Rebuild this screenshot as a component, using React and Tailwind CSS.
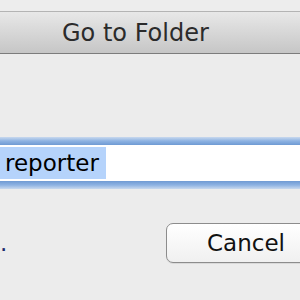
export default function App() {
  return (
    <div
      className="w-[300px] h-[300px] overflow-hidden bg-[#ececec] flex flex-col"
      style={{ fontFamily: '"DejaVu Sans", "Liberation Sans", sans-serif' }}
    >
      <div className="h-[12px] shrink-0 border-b border-[#b4b4b4] bg-[#ededed]" />
      <div className="h-[42px] shrink-0 flex items-center pl-[62px] bg-gradient-to-b from-[#e8e8e8] to-[#c6c6c6] border-b border-[#7c7c7c]">
        <span className="text-[24px] leading-none text-[#2b2b2b] whitespace-nowrap">Go to Folder</span>
      </div>
      <div className="h-[83px] shrink-0" />
      <div className="h-[52px] shrink-0 flex flex-col">
        <div className="h-[8px] bg-gradient-to-b from-[#c9d9ee] via-[#8db2e2] to-[#6f9ad3]" />
        <div className="flex-1 bg-white flex items-center">
          <span className="h-[32px] w-[106px] bg-[#b5d3fb] flex items-center pl-[5px] text-[23px] leading-none text-black whitespace-nowrap">
            reporter
          </span>
        </div>
        <div className="h-[8px] bg-gradient-to-b from-[#6f9ad3] via-[#8db2e2] to-[#c9d9ee]" />
      </div>
      <div className="h-[34px] shrink-0" />
      <div className="flex items-center h-[40px] shrink-0">
        <span className="w-[166px] shrink-0 text-[23px] leading-none text-[#1d2a6b]">.</span>
        <button className="w-[160px] h-[40px] shrink-0 rounded-[7px] border-[1.5px] border-[#8c8c8c] bg-gradient-to-b from-white to-[#f0f0f0] flex items-center justify-center text-[23px] leading-none text-[#111] shadow-[0_1px_0_rgba(0,0,0,0.08)]">
          Cancel
        </button>
      </div>
    </div>
  )
}
